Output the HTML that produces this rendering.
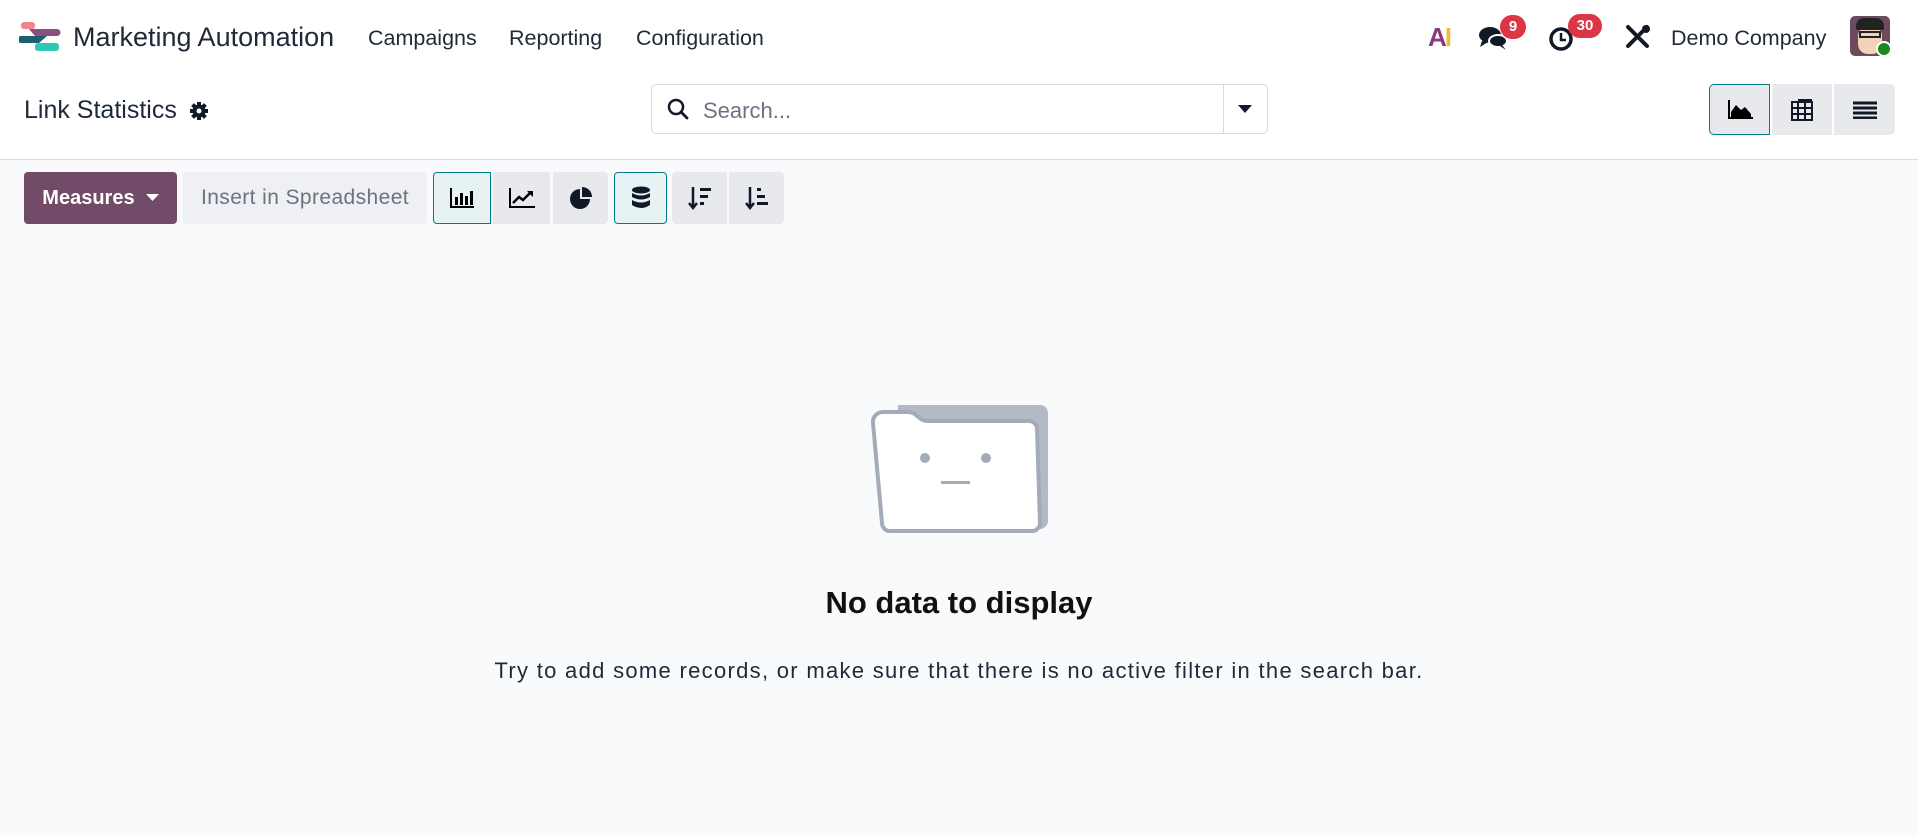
<!DOCTYPE html>
<html><head><meta charset="utf-8"><style>
*{box-sizing:border-box;margin:0;padding:0}
body{width:1918px;height:836px;background:#f9fafb;font-family:"Liberation Sans",sans-serif;color:#111827;position:relative;overflow:hidden}
.top{position:absolute;left:0;top:0;width:1918px;height:160px;background:#fff;border-bottom:1px solid #d8dadd}
.a{position:absolute}
.nav{font-size:21.5px;color:#1f2937;top:26px}
.btn{position:absolute;top:172px;height:52px;background:#e7e9ed;border-radius:4px;display:flex;align-items:center;justify-content:center}
.act{background:#e6f2f3;border:1px solid #017e84}
.vb{position:absolute;top:84px;height:51px;background:#e7e9ed;display:flex;align-items:center;justify-content:center}
.badge{position:absolute;background:#dc3545;color:#fff;font-weight:bold;font-size:15px;border-radius:12px;height:24px;line-height:24px;text-align:center}
</style></head><body>
<div class="top"></div>
<svg class="a" style="left:19px;top:22px" width="42" height="30" viewBox="0 0 42 30">
<rect x="2" y="0" width="14" height="7" rx="3" fill="#f2848a"/>
<path d="M10 7 H38 a3 3 0 0 1 0 7 H16 Z" fill="#8b4f7d"/>
<path d="M2 14 H28 L20 21 H2 a3 3 0 0 1 0-7Z" fill="#1c5f6f"/>
<rect x="16" y="21" width="24" height="8" rx="3" fill="#2ec8b4"/>
</svg>
<div class="a" style="left:73px;top:22px;font-size:27px;color:#1f2937">Marketing Automation</div>
<div class="a nav" style="left:368px">Campaigns</div>
<div class="a nav" style="left:509px">Reporting</div>
<div class="a nav" style="left:636px">Configuration</div>
<div class="a" style="left:1428px;top:22px;font-size:26px;font-weight:bold;letter-spacing:-2px"><span style="color:#8b3a7d">A</span><span style="color:#f5b93a">I</span></div>
<svg class="a" style="left:1478px;top:25px" width="32" height="26" viewBox="0 0 32 26"><ellipse cx="12" cy="10" rx="11" ry="8" fill="#111827"/><path d="M4 16 L2 22 L10 17Z" fill="#111827"/><ellipse cx="20" cy="16" rx="9" ry="6" fill="#111827" stroke="#fff" stroke-width="2"/><path d="M24 20 L28 25 L22 21Z" fill="#111827"/></svg>
<div class="badge" style="left:1500px;top:15px;width:26px">9</div>
<svg class="a" style="left:1548px;top:24px" width="28" height="28" viewBox="0 0 28 28"><circle cx="13" cy="15" r="10" fill="none" stroke="#111827" stroke-width="3.5"/><path d="M13 9 V16 H18" fill="none" stroke="#111827" stroke-width="2.5"/></svg>
<div class="badge" style="left:1568px;top:14px;width:34px">30</div>
<svg class="a" style="left:1625px;top:24px" width="26" height="26" viewBox="0 0 26 26"><path d="M3 3 L22 22 M22 3 L3 22" stroke="#111827" stroke-width="4" stroke-linecap="round"/><circle cx="21" cy="5" r="4" fill="#111827"/></svg>
<div class="a" style="left:1671px;top:26px;font-size:21.5px;color:#1f2937">Demo Company</div>
<div class="a" style="left:1850px;top:16px;width:40px;height:40px;border-radius:5px;background:#6d4b5e;overflow:hidden">
<div class="a" style="left:8px;top:10px;width:24px;height:28px;background:#f1d3b8;border-radius:10px"></div>
<div class="a" style="left:6px;top:2px;width:28px;height:12px;background:#222;border-radius:8px 8px 2px 2px"></div>
<div class="a" style="left:9px;top:15px;width:22px;height:7px;border:2px solid #222"></div></div>
<div class="a" style="left:1876px;top:41px;width:16px;height:16px;border-radius:50%;background:#1a8a1f;border:2px solid #fff"></div>

<div class="a" style="left:24px;top:96px;font-size:25px;color:#1f2937">Link Statistics</div>
<svg class="a" style="left:189px;top:101px" width="20" height="20" viewBox="0 0 20 20"><g fill="#111827"><circle cx="10" cy="10" r="6.5"/><g stroke="#111827" stroke-width="4"><path d="M10 1V19M1 10H19M3.6 3.6L16.4 16.4M16.4 3.6L3.6 16.4"/></g></g><circle cx="10" cy="10" r="2.5" fill="#fff"/></svg>

<div class="a" style="left:651px;top:84px;width:617px;height:50px;border:1px solid #d8dadd;border-radius:5px;background:#fff"></div>
<div class="a" style="left:1223px;top:85px;width:1px;height:48px;background:#d8dadd"></div>
<svg class="a" style="left:666px;top:97px" width="24" height="24" viewBox="0 0 24 24"><circle cx="10" cy="10" r="7" fill="none" stroke="#111827" stroke-width="2.5"/><path d="M15 15 L21 21" stroke="#111827" stroke-width="2.8" stroke-linecap="round"/></svg>
<div class="a" style="left:703px;top:98px;font-size:22px;color:#6b7280">Search...</div>
<svg class="a" style="left:1238px;top:105px" width="14" height="9"><path d="M0 0H14L7 8Z" fill="#111827"/></svg>

<div class="vb act" style="left:1709px;width:61px;border-radius:5px 0 0 5px"><svg width="26" height="20"><path d="M2 0V18H26" stroke="#000" stroke-width="2" fill="none"/><path d="M4 17 L4 12 L9 5 L14 10 L18 7 L24 14 V17Z" fill="#000"/></svg></div>
<div class="vb" style="left:1772px;width:60px"><svg width="22" height="22"><g stroke="#111827" stroke-width="2" fill="none"><rect x="1" y="3" width="20" height="18"/><path d="M1 9H21M1 15H21M7 3V21M14 3V21M7 1H21"/></g></svg></div>
<div class="vb" style="left:1834px;width:61px;border-radius:0 5px 5px 0"><svg width="24" height="18"><g stroke="#111827" stroke-width="3"><path d="M0 2H24M0 7H24M0 12H24M0 17H24"/></g></svg></div>

<div class="btn" style="left:24px;width:153px;background:#714b67;color:#fff;font-weight:bold;font-size:20px">Measures&nbsp;&nbsp;<svg width="13" height="8"><path d="M0 0H13L6.5 7Z" fill="#fff"/></svg></div>
<div class="btn" style="left:183px;width:244px;color:#6b7280;font-size:21px;letter-spacing:0.4px;background:#eef0f3">Insert in Spreadsheet</div>
<div class="btn act" style="left:433px;width:58px;border-radius:4px 0 0 4px"><svg width="24" height="20"><path d="M1 0V19H24" stroke="#000" stroke-width="2" fill="none"/><g fill="#000"><rect x="5" y="9" width="3" height="8"/><rect x="10" y="5" width="3" height="12"/><rect x="15" y="8" width="3" height="9"/><rect x="20" y="3" width="3" height="14"/></g></svg></div>
<div class="btn" style="left:493px;width:57px;border-radius:0"><svg width="26" height="20"><path d="M1 0V19H26" stroke="#000" stroke-width="2" fill="none"/><path d="M4 15 L10 9 L14 12 L22 4" stroke="#000" stroke-width="2.5" fill="none"/><path d="M18 3H24V9Z" fill="#000"/></svg></div>
<div class="btn" style="left:553px;width:55px;border-radius:0 4px 4px 0"><svg width="22" height="22"><path d="M10 2 A10 10 0 1 0 20 12 H10Z" fill="#111827"/><path d="M12 0 A10 10 0 0 1 22 10 H12Z" fill="#111827"/></svg></div>
<div class="btn act" style="left:614px;width:53px"><svg width="20" height="24"><g fill="#111827"><ellipse cx="10" cy="4" rx="9" ry="3.5"/><path d="M1 7 Q10 12 19 7 V11 Q10 16 1 11Z"/><path d="M1 14 Q10 19 19 14 V19 Q10 25 1 19Z"/></g></svg></div>
<div class="btn" style="left:672px;width:55px;border-radius:4px 0 0 4px"><svg width="24" height="24"><path d="M5 1V21M1 17L5 22L9 17" stroke="#111827" stroke-width="2.5" fill="none"/><g fill="#111827"><rect x="12" y="2" width="11" height="3"/><rect x="12" y="9" width="8" height="3"/><rect x="12" y="16" width="4" height="3"/></g></svg></div>
<div class="btn" style="left:729px;width:55px;border-radius:0 4px 4px 0"><svg width="24" height="24"><path d="M5 1V21M1 17L5 22L9 17" stroke="#111827" stroke-width="2.5" fill="none"/><g fill="#111827"><rect x="12" y="2" width="4" height="3"/><rect x="12" y="9" width="8" height="3"/><rect x="12" y="16" width="11" height="3"/></g></svg></div>

<svg class="a" style="left:868px;top:403px" width="184" height="130" viewBox="0 0 184 130">
<path d="M30 2 H172 a8 8 0 0 1 8 8 V118 a8 8 0 0 1-8 8 H30Z" fill="#b3bac5"/>
<path d="M5 20 a10 10 0 0 1 10-11 H40 a12 12 0 0 1 9 4 l4 3 a10 10 0 0 0 6 2 H161 a8 8 0 0 1 8 8 L172 120 a8 8 0 0 1-8 8 H22 a8 8 0 0 1-8-8Z" fill="#fff" stroke="#a2abb7" stroke-width="4"/>
<circle cx="57" cy="55" r="5" fill="#a2abb7"/><circle cx="118" cy="55" r="5" fill="#a2abb7"/>
<rect x="73" y="78" width="29" height="3" fill="#a2abb7"/>
</svg>
<div class="a" style="left:0;width:1918px;top:585px;text-align:center;font-size:31px;font-weight:bold;color:#111">No data to display</div>
<div class="a" style="left:0;width:1918px;top:658px;text-align:center;font-size:22px;letter-spacing:1.3px;color:#1f2937">Try to add some records, or make sure that there is no active filter in the search bar.</div>
</body></html>
